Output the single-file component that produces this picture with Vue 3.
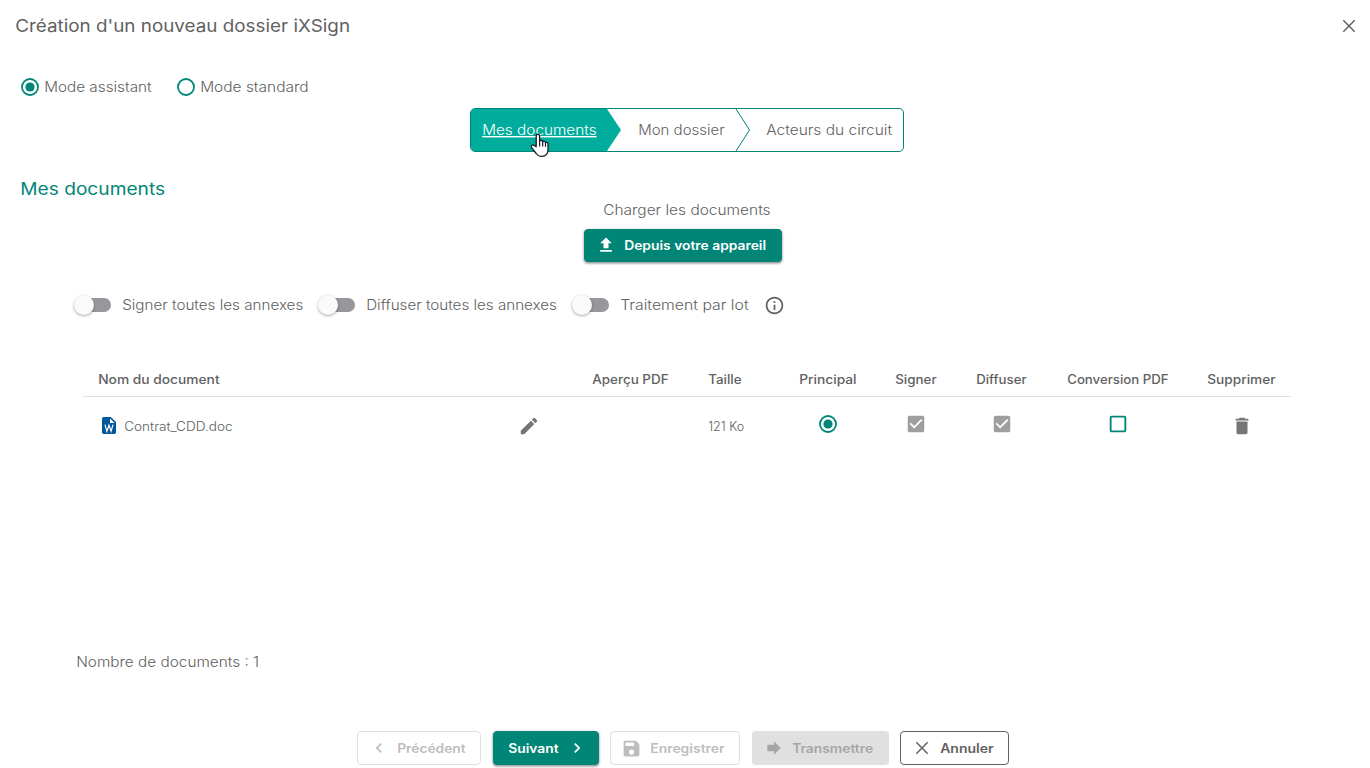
<script setup>
import { h } from 'vue'

const Label = (props) =>
  h('svg', { class: 'label', width: props.w, height: 20 }, [
    h('text', { x: 0.2, y: 15, fill: 'currentColor', textLength: props.w - 0.6, lengthAdjust: 'spacingAndGlyphs' }, props.t),
  ])
Label.props = ['t', 'w']

const paths = {
  upload: 'M5 20h14v-2H5v2zm0-10h4v6h6v-6h4l-7-7-7 7z',
  info: 'M11 17h2v-6h-2v6zm1-15C6.48 2 2 6.48 2 12s4.48 10 10 10 10-4.480 10-10S17.520 2 12 2zm0 18c-4.410 0-8-3.590-8-8s3.590-8 8-8 8 3.590 8 8-3.590 8-8 8zM11 9h2V7h-2v2z',
  edit: 'M3 17.250V21h3.750L17.810 9.940l-3.750-3.750L3 17.250zM20.710 7.040a1 1 0 0 0 0-1.410l-2.340-2.340a1 1 0 0 0-1.410 0l-1.830 1.830 3.750 3.750 1.830-1.830z',
  trash: 'M6 19c0 1.100.9 2 2 2h8c1.100 0 2-.9 2-2V7H6v12zM19 4h-3.500l-1-1h-5l-1 1H5v2h14V4z',
  checked: 'M19 3H5c-1.110 0-2 .9-2 2v14c0 1.100.89 2 2 2h14c1.110 0 2-.9 2-2V5c0-1.100-.89-2-2-2zm-9 14l-5-5 1.410-1.410L10 14.170l7.590-7.590L19 8l-9 9z',
  unchecked: 'M19 5v14H5V5h14m0-2H5c-1.100 0-2 .9-2 2v14c0 1.100.9 2 2 2h14c1.100 0 2-.9 2-2V5c0-1.100-.9-2-2-2z',
  prev: 'M15.410 7.410L14 6l-6 6 6 6 1.410-1.410L10.830 12z',
  next: 'M10 6L8.590 7.410 13.170 12l-4.580 4.590L10 18l6-6z',
  save: 'M17 3H5c-1.110 0-2 .9-2 2v14c0 1.100.89 2 2 2h14c1.100 0 2-.9 2-2V7l-4-4zm-5 16c-1.660 0-3-1.340-3-3s1.340-3 3-3 3 1.340 3 3-1.340 3-3 3zm3-10H5V5h10v4z',
  forward: 'M12 8V4l8 8-8 8v-4H4V8z',
}
const Icon = (props) =>
  h('svg', { class: 'icon', width: props.s, height: props.s, viewBox: '0 0 24 24' }, [
    h('path', { d: paths[props.n], fill: 'currentColor' }),
  ])
Icon.props = ['n', 's']

const Cross = () =>
  h('svg', { class: 'icon', width: 14, height: 14, viewBox: '0 0 14 14' }, [
    h('path', { d: 'M1.300 1.300l11.400 11.400M12.700 1.300L1.300 12.700', fill: 'none', stroke: 'currentColor', 'stroke-width': 1.5 }),
  ])

const Radio = (props) =>
  h('svg', { class: 'radio', width: 18, height: 18, viewBox: '0 0 18 18' }, [
    h('circle', { cx: 9, cy: 9, r: 8, fill: 'none', stroke: 'currentColor', 'stroke-width': 1.8 }),
    props.on ? h('circle', { cx: 9, cy: 9, r: 4.6, fill: 'currentColor' }) : null,
  ])
Radio.props = ['on']

const toggles = [
  { t: 'Signer toutes les annexes', w: 181.7 },
  { t: 'Diffuser toutes les annexes', w: 191.3 },
  { t: 'Traitement par lot', w: 129 },
]
const columns = [
  { t: 'Nom du document', w: 122, c: 'first' },
  { t: 'Aperçu PDF', w: 77 },
  { t: 'Taille', w: 34 },
  { t: 'Principal', w: 58, c: 'mid' },
  { t: 'Signer', w: 42, c: 'mid' },
  { t: 'Diffuser', w: 51, c: 'mid' },
  { t: 'Conversion PDF', w: 102, c: 'mid' },
  { t: 'Supprimer', w: 69, c: 'mid last' },
]
</script>

<template>
  <div class="dialog">
    <header class="head">
      <Label t="Création d'un nouveau dossier iXSign" :w="335.5" />
      <Cross />
    </header>

    <div class="modes">
      <span class="mode"><Radio :on="true" /><Label t="Mode assistant" :w="108" /></span>
      <span class="mode"><Radio :on="false" /><Label t="Mode standard" :w="109" /></span>
    </div>

    <nav class="steps">
      <a class="step active"><Label t="Mes documents" :w="115" /></a>
      <a class="step second"><Label t="Mon dossier" :w="87" /></a>
      <svg class="divider" width="15" height="42" viewBox="0 0 15 42"><path d="M0 0L13.500 21 0 42" fill="none" stroke="#008577" /></svg>
      <a class="step third"><Label t="Acteurs du circuit" :w="126.500" /></a>
      <svg class="cursor" width="20" height="25" viewBox="0 0 20 25">
        <path d="M6.200 13.700V3.100C6.200.6 9.600.6 9.600 3.100V8.300C10.300 6.900 12.400 7.200 12.700 8.700C13.600 7.700 15.300 8.200 15.500 9.600C16.700 8.900 18 9.700 18 11.100V16.500C18 20.700 15.500 23.300 12 23.300H10.900C8.700 23.300 7.400 22.300 6.200 20.500L1.700 14.700C.3 12.800 2.800 11.100 4.300 12.400Z" fill="#fff" stroke="#1c1b2e" stroke-width="1.300" stroke-linejoin="round" />
        <path d="M9.600 8V13M12.700 8.700V13M15.500 9.600V13.300" fill="none" stroke="#1c1b2e" stroke-width="1.200" stroke-linecap="round" />
      </svg>
    </nav>

    <h2 class="title"><Label t="Mes documents" :w="145.500" /></h2>

    <section class="upload">
      <Label t="Charger les documents" :w="168" />
      <button class="btn primary load"><Icon n="upload" :s="20" /><Label t="Depuis votre appareil" :w="142.500" /></button>
    </section>

    <div class="toggles">
      <span v-for="x in toggles" :key="x.t" class="toggle">
        <i class="track"><i class="thumb"></i></i>
        <Label :t="x.t" :w="x.w" />
      </span>
      <Icon n="info" :s="21" class="info" />
    </div>

    <div class="table">
      <div class="row thead">
        <div v-for="c in columns" :key="c.t" class="cell" :class="c.c"><Label :t="c.t" :w="c.w" /></div>
      </div>
      <div class="row body">
        <div class="cell name">
          <svg class="word" width="14" height="17" viewBox="0 0 14 17">
            <path d="M1.700 0H8.800L14 5V15.300Q14 17 12.300 17H1.700Q0 17 0 15.300V1.700Q0 0 1.700 0Z" fill="#01579b" />
            <path d="M8 1.400V6H12.700Z" fill="#fff" />
            <path d="M3 7.700L4.900 14.300 7 8.200 9.100 14.300 11 7.700" fill="none" stroke="#fff" stroke-width="1.200" />
          </svg>
          <Label t="Contrat_CDD.doc" :w="109" />
          <Icon n="edit" :s="22" class="edit" />
        </div>
        <div class="cell"></div>
        <div class="cell"><Label t="121 Ko" :w="36.500" /></div>
        <div class="cell mid raised teal"><Radio :on="true" /></div>
        <div class="cell mid raised grey"><Icon n="checked" :s="22" /></div>
        <div class="cell mid raised grey"><Icon n="checked" :s="22" /></div>
        <div class="cell mid raised teal"><Icon n="unchecked" :s="22" /></div>
        <div class="cell mid last bin"><Icon n="trash" :s="22" /></div>
      </div>
    </div>

    <p class="count"><Label t="Nombre de documents : 1" :w="183.500" /></p>

    <footer class="actions">
      <button class="btn ghost back"><Icon n="prev" :s="20" /><Label t="Précédent" :w="69" /></button>
      <button class="btn primary go"><Label t="Suivant" :w="51" /><Icon n="next" :s="20" /></button>
      <button class="btn ghost store"><Icon n="save" :s="21" /><Label t="Enregistrer" :w="75" /></button>
      <button class="btn muted send"><Icon n="forward" :s="20" /><Label t="Transmettre" :w="81.500" /></button>
      <button class="btn outline cancel"><Cross /><Label t="Annuler" :w="54" /></button>
    </footer>
  </div>
</template>

<style>
body { margin: 0; background: #fff; }
</style>

<style scoped>
.dialog {
  width: 1370px; height: 768px; box-sizing: border-box; overflow: hidden;
  display: flex; flex-direction: column; background: #fff;
  font-family: Inter, "Open Sans", sans-serif; font-size: 14px; font-weight: 350; color: #616161;
}
.dialog :deep(svg) { display: block; flex: none; overflow: visible; }
.head { height: 75px; box-sizing: border-box; padding: 17px 14.5px 0 14.5px; display: flex; justify-content: space-between; align-items: flex-start; font-size: 17.3px; font-weight: 420; }
.head .icon { margin-top: 1.5px; color: #616161; }
.modes { height: 33px; padding-left: 20.5px; display: flex; gap: 25px; align-items: flex-start; }
.mode { display: flex; gap: 5px; padding-top: 2px; }
.mode .radio { color: #008577; margin-top: 0.5px; }
.steps { position: relative; width: 434px; height: 44px; box-sizing: border-box; margin-left: 470px; display: flex; align-items: stretch; border: 1px solid #008577; border-radius: 5px; }
.step { box-sizing: border-box; padding-top: 11px; }
.active { width: 150px; padding-left: 10.5px; color: #fff; background: #00ad9c; border-radius: 4px 0 0 4px; clip-path: polygon(0 0, 136px 0, 150px 50%, 136px 100%, 0 100%); }
.active :deep(text) { text-decoration: underline; }
.second { width: 115px; padding-left: 17px; }
.third { padding-left: 15px; }
.cursor { position: absolute; left: 59px; top: 23.5px; }
.title { height: 20px; margin: 28px 0 0 20px; font-size: 17.3px; font-weight: 430; color: #008577; }
.upload { display: flex; flex-direction: column; width: 198px; margin-left: 584px; }
.upload > .label { margin-left: 19px; }
.btn { font: 600 12.5px Inter, "Open Sans", sans-serif; box-sizing: border-box; height: 34px; padding: 0; border: 1px solid transparent; border-radius: 4px; display: flex; align-items: center; background: none; color: #616161; }
.primary { background: #008577; border-color: #008577; color: #fff; box-shadow: 0 1px 3px rgba(0, 0, 0, 0.4), 0 2px 2px rgba(0, 0, 0, 0.12); }
.load { height: 33px; margin-top: 9px; padding: 0 0 1px 11px; gap: 8px; }
.toggles { margin: 33px 0 0 74px; height: 20px; display: flex; align-items: center; }
.toggle { display: flex; align-items: center; margin-right: 14.5px; }
.track { width: 34px; height: 14px; margin: 0 11px 0 3px; border-radius: 7px; background: #97979c; }
.thumb { display: block; width: 20px; height: 20px; margin: -3px 0 0 -3px; border-radius: 50%; background: #fafafa; box-shadow: 0 1px 3px rgba(0, 0, 0, 0.35); }
.info { margin: 1px 0 0 1px; }
.table { margin: 49px 0 0 83px; width: 1208px; font-size: 12.4px; }
.row { display: grid; grid-template-columns: 489px 116px 92px 95px 81px 91px 141px 103px; }
.cell { box-sizing: border-box; padding-left: 20px; display: flex; align-items: center; }
.thead { height: 33px; box-sizing: border-box; border-bottom: 1px solid #e0e0e0; font-weight: 450; }
.thead .cell { align-items: flex-start; padding-top: 5px; }
.thead .first { padding-left: 15px; }
.cell.mid { padding-left: 0; justify-content: center; }
.cell.last { padding-left: 4px; }
.body { height: 57px; }
.body .name { padding-left: 19.3px; }
.word { margin-right: 7.7px; }
.edit { margin-left: 285px; color: #757575; }
.body .raised { padding-bottom: 4px; }
.teal { color: #008577; }
.grey { color: #9e9e9e; }
.bin { color: #757575; }
.count { height: 20px; margin: 198px 0 0 75.5px; }
.actions { display: flex; margin: 59px 0 0 357px; }
.ghost { border-color: #e0e0e0; color: #bdbdbd; }
.muted { background: #e0e0e0; color: #a6a6a6; }
.outline { border-color: #616161; }
.back { width: 124px; padding-left: 11px; gap: 8px; }
.go { width: 106px; padding-left: 14px; gap: 8px; margin-left: 12px; }
.store { width: 130px; padding-left: 10px; gap: 8px; margin-left: 11px; }
.send { width: 137px; padding-left: 11px; gap: 8px; margin-left: 12px; }
.cancel { width: 109px; padding-left: 14px; gap: 11px; margin-left: 11px; }
</style>
